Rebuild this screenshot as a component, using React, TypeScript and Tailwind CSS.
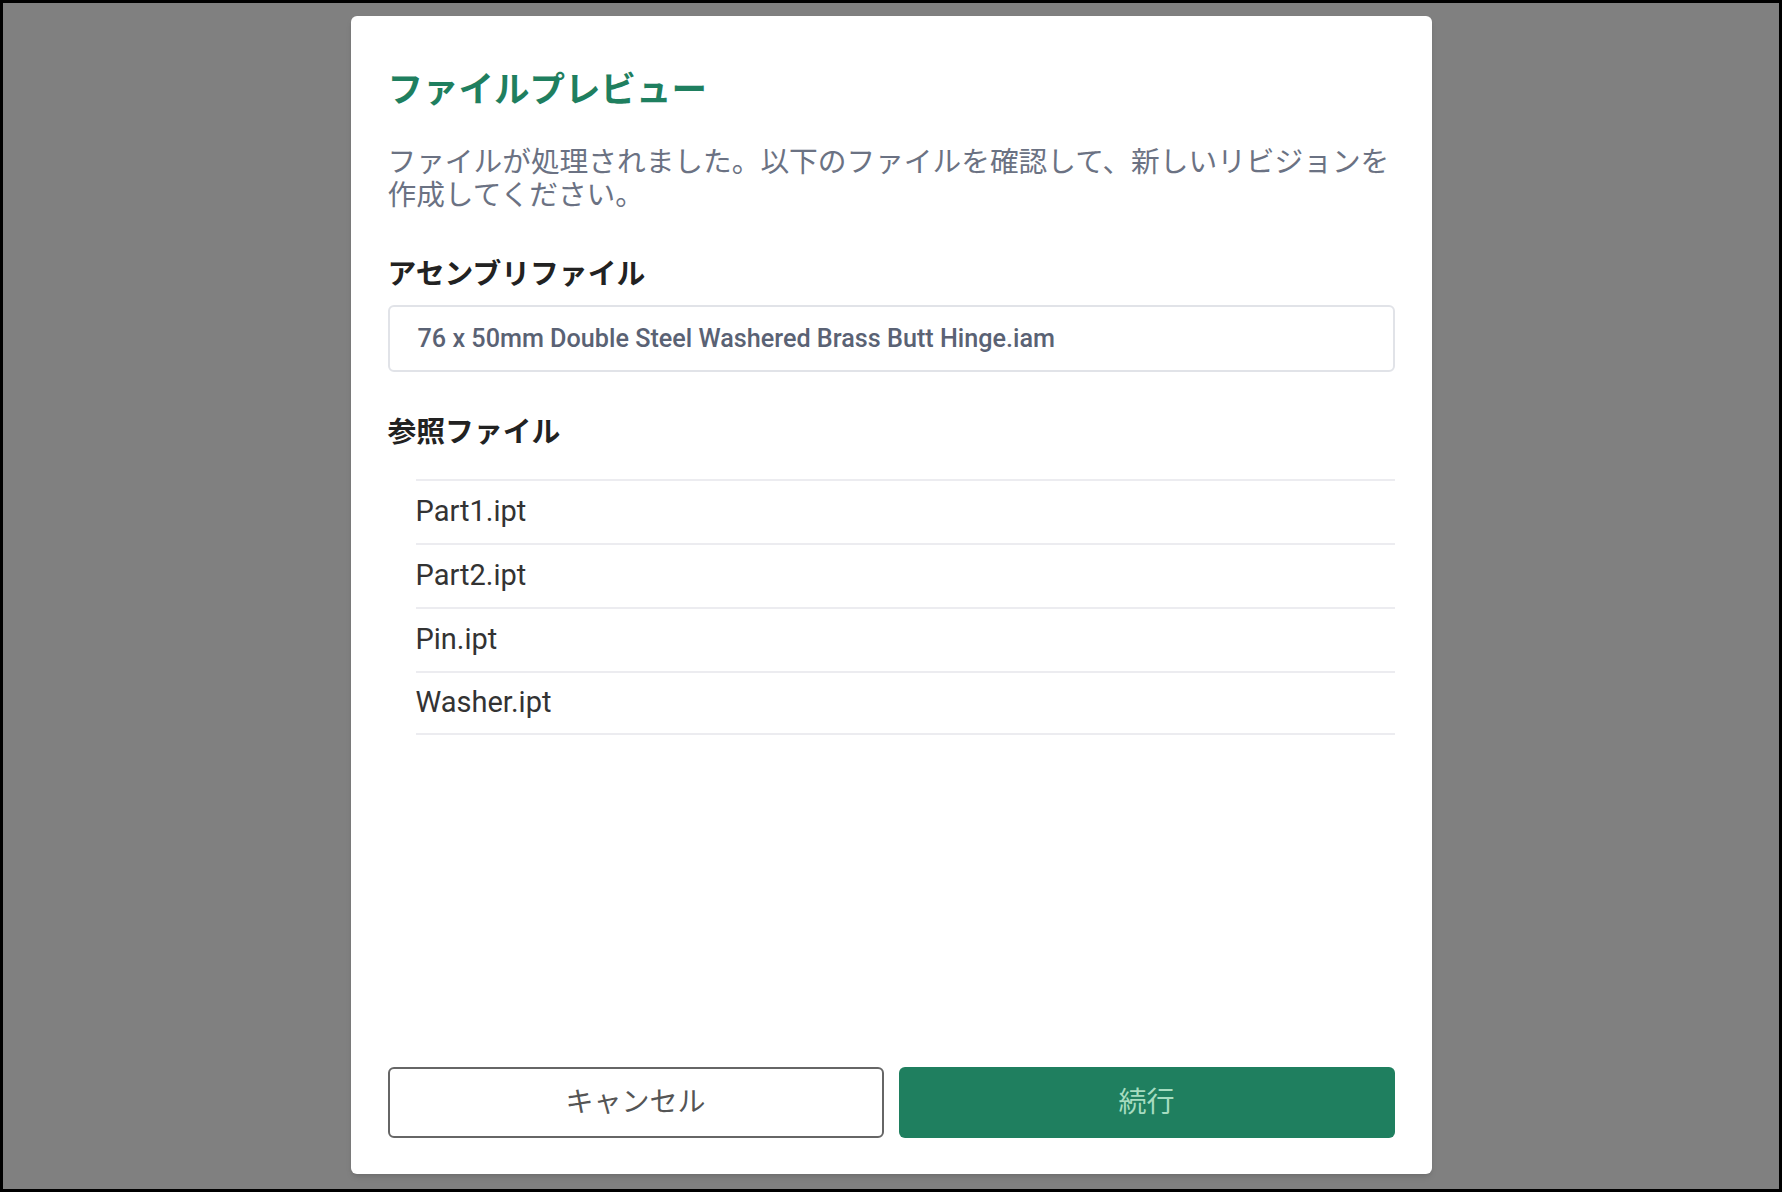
const files = ["Part1.ipt", "Part2.ipt", "Pin.ipt", "Washer.ipt"]

export default function App() {
  return (
    <div className="w-[1782px] h-[1192px] bg-[#808080] border-[3px] border-black flex justify-center font-['Roboto','Noto_Sans_CJK_JP',sans-serif]">
      {/* Dialog */}
      <div className="mt-[13px] w-[1081px] h-[1158px] bg-white rounded-[6px] shadow-md flex flex-col px-[37px] pt-[54px] pb-[36px]">
        <h1 className="text-[35.5px] leading-[41px] font-bold text-[#1f7f5f]">ファイルプレビュー</h1>
        <p className="mt-[35px] text-[28.7px] leading-[33px] text-[#6b7283]">
          ファイルが処理されました。以下のファイルを確認して、新しいリビジョンを作成してください。
        </p>

        <h2 className="mt-[45px] text-[28.8px] leading-[34px] font-bold text-[#222]">アセンブリファイル</h2>
        <div className="mt-[14px] h-[67px] border-2 border-[#e1e3e8] rounded-[6px] flex items-center px-[28px]">
          <span className="text-[25.2px] font-medium text-[#5a6274]">76 x 50mm Double Steel Washered Brass Butt Hinge.iam</span>
        </div>

        <h2 className="mt-[43px] text-[28.8px] leading-[34px] font-bold text-[#222]">参照ファイル</h2>
        <ul className="mt-[30px] pl-[28px]">
          {files.map((f) => (
            <li key={f} className="h-[64px] border-t-2 border-[#ececf0] flex items-center text-[29px] text-[#333] last:border-b-2">
              {f}
            </li>
          ))}
        </ul>

        {/* Actions */}
        <div className="mt-auto grid grid-cols-2 gap-[15px]">
          <button className="h-[71px] border-2 border-[#666] rounded-[6px] text-[28px] text-[#555] bg-white">キャンセル</button>
          <button className="h-[71px] rounded-[6px] text-[28px] text-[#a6dcc0] bg-[#1f7f5f]">続行</button>
        </div>
      </div>
    </div>
  )
}
